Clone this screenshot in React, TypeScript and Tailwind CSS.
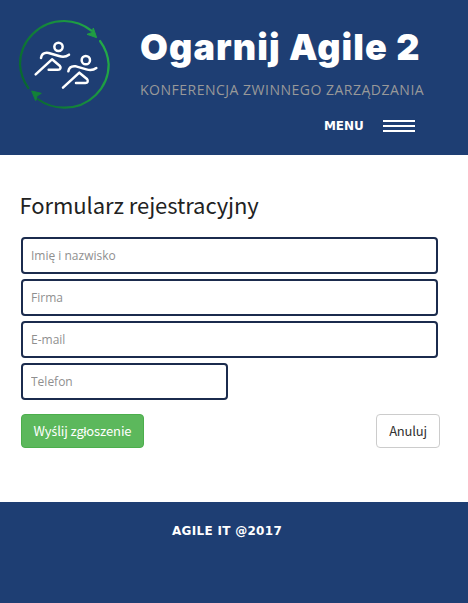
function Runner({ x = 0, y = 0 }: { x?: number; y?: number }) {
  return (
    <g transform={`translate(${x} ${y})`} fill="none" stroke="#fff" strokeWidth="7.5" strokeLinecap="round" strokeLinejoin="round">
      <circle cx="145.5" cy="110.500" r="12.500" />
      <path d="M93 144C95 132 103 127 116 129L147 138C160 142 169 140 177 134" />
      <path d="M77 193L126 148L149 167C154 173 151 179 144 179H116" />
    </g>
  );
}

function Logo() {
  return (
    <svg className="ml-2.5 mt-2.5 size-[110px] shrink-0" viewBox="0 0 330 330">
      <defs>
        <linearGradient id="ring" gradientUnits="userSpaceOnUse" x1="30" y1="220" x2="297" y2="100">
          <stop offset="0" stopColor="#07652f" />
          <stop offset="1" stopColor="#24ae48" />
        </linearGradient>
      </defs>
      <g fill="none" stroke="url(#ring)" strokeWidth="6.5" strokeLinecap="round">
        <path d="M55 234A132.500 132.500 0 0 1 30 163A132.500 130 0 0 1 162.500 33A132.500 130 0 0 1 244 62" />
        <path d="M270 93A132.500 132.500 0 0 1 296 163A132.500 130 0 0 1 163.500 293A132.500 130 0 0 1 83 267" />
      </g>
      <path d="M260 83L250 54L245 68L231 73Z" fill="#209d43" stroke="#209d43" strokeWidth="3" strokeLinejoin="round" />
      <path d="M65 243L94 250L81 258L77 272Z" fill="#128138" stroke="#128138" strokeWidth="3" strokeLinejoin="round" />
      <Runner />
      <Runner x={82} y={40} />
    </svg>
  );
}

const field =
  "block h-[37px] rounded-[4px] border-2 border-[#1b2b4d] bg-white px-2 pb-px font-['Open_Sans',sans-serif] text-[12px] text-[#333] placeholder:text-[#8f8f8f] placeholder:opacity-100 outline-none";

export default function App() {
  return (
    <div className="flex h-[603px] w-[468px] flex-col bg-white">
      <header className="flex h-[155px] bg-[#1e3e73]">
        <Logo />
        <div className="ml-5 flex flex-1 flex-col">
          <h1 className="mt-[23px] whitespace-nowrap font-['Inter',sans-serif] text-[36px] font-black leading-[48px] tracking-[1.1px] text-white">
            Ogarnij Agile 2
          </h1>
          <p className="mt-[9px] whitespace-nowrap font-['Open_Sans',sans-serif] text-[14px] leading-[20px] tracking-[0.5px] text-[#999]">
            KONFERENCJA ZWINNEGO ZARZĄDZANIA
          </p>
          <button className="mt-4 ml-[184px] flex h-5 items-center gap-5 font-['DejaVu_Sans',sans-serif] text-[12px] font-bold tracking-[-0.1px] text-white">
            <span className="w-[39px] text-left">MENU</span>
            <span className="flex w-8 flex-col gap-[3px]">
              <span className="h-0.5 bg-white" />
              <span className="h-0.5 bg-white" />
              <span className="h-0.5 bg-white" />
            </span>
          </button>
        </div>
      </header>
      <main className="h-[347px] pl-[19px] pt-[32px]">
        <h2 className="ml-[0.5px] whitespace-nowrap font-['Noto_Sans_CJK_SC',sans-serif] text-[22px] leading-[35px] tracking-[-0.06px] text-[#222]">
          Formularz rejestracyjny
        </h2>
        <form className="mt-[15px] ml-0.5 flex flex-col gap-[5px]">
          <input className={`${field} w-[417px]`} placeholder="Imię i nazwisko" />
          <input className={`${field} w-[417px]`} placeholder="Firma" />
          <input className={`${field} w-[417px]`} placeholder="E-mail" />
          <input className={`${field} w-[207px]`} placeholder="Telefon" />
          <div className="mt-[9px] flex w-[419px] justify-between font-['Noto_Sans_CJK_SC',sans-serif] text-[13px] leading-[32px]">
            <button type="submit" className="h-[34px] w-[123px] whitespace-nowrap rounded-[4px] border border-[#4cae4c] bg-[#5cb85c] tracking-[-0.12px] text-white">
              Wy<span className="font-['Noto_Sans',sans-serif] text-[12px]">ś</span>lij zgłoszenie
            </button>
            <button type="button" className="h-[34px] w-16 rounded-[4px] border border-[#ccc] bg-white tracking-[-0.2px] text-[#333]">
              Anuluj
            </button>
          </div>
        </form>
      </main>
      <footer className="flex-1 bg-[#1e3e73] pl-[172px] pt-[21px] font-['DejaVu_Sans',sans-serif] text-[12px] font-bold leading-[16px] tracking-[0.3px] text-white">
        AGILE IT @2017
      </footer>
    </div>
  );
}
